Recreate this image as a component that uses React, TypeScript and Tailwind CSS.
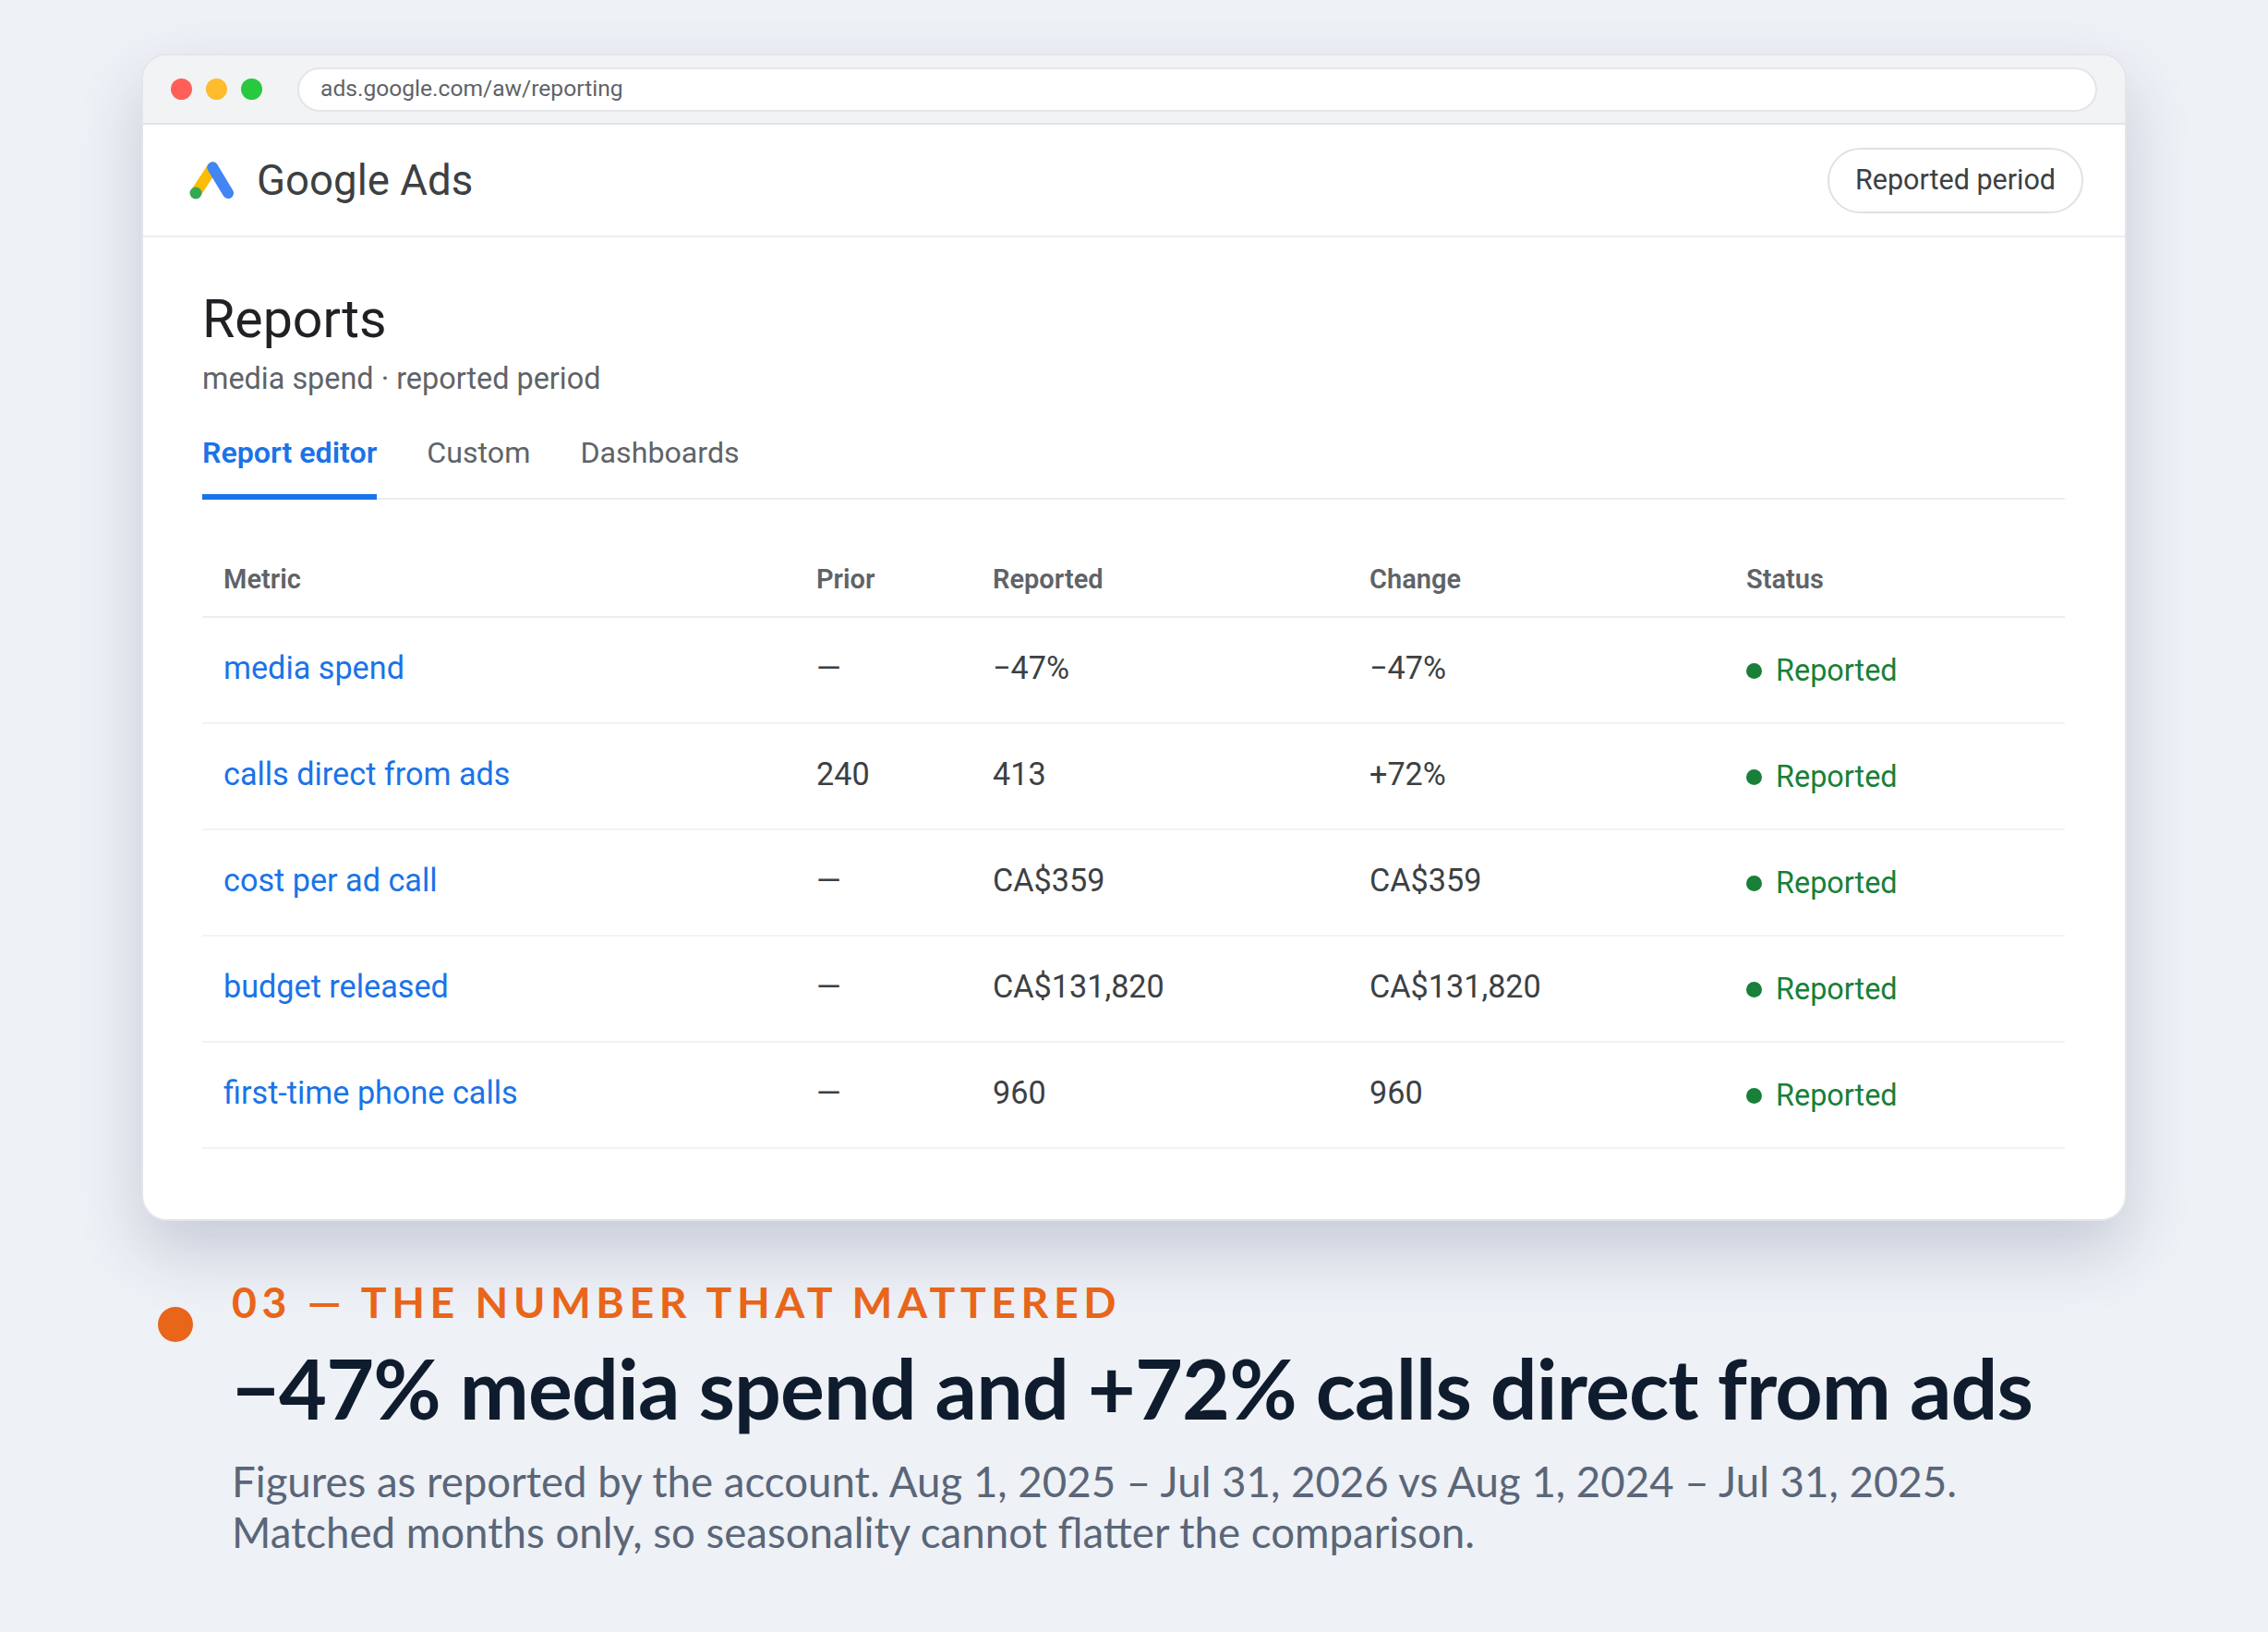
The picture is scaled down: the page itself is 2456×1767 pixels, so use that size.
const rows = [
  { metric: "media spend", prior: "—", reported: "−47%", change: "−47%" },
  { metric: "calls direct from ads", prior: "240", reported: "413", change: "+72%" },
  { metric: "cost per ad call", prior: "—", reported: "CA$359", change: "CA$359" },
  { metric: "budget released", prior: "—", reported: "CA$131,820", change: "CA$131,820" },
  { metric: "first-time phone calls", prior: "—", reported: "960", change: "960" },
];

const gridCols = "grid grid-cols-[642px_192px_408px_407px_1fr]";

function AdsLogo() {
  return (
    <svg width="48" height="42" viewBox="0 0 48 42" fill="none">
      <path d="M25.3 7.3 7 35" stroke="#fbbc04" strokeWidth="12" strokeLinecap="round" />
      <path d="M25.3 7.3 42 35" stroke="#4285f4" strokeWidth="12" strokeLinecap="round" />
      <circle cx="7" cy="35" r="6.5" fill="#34a853" />
    </svg>
  );
}

export default function App() {
  return (
    <div className="min-h-[1767px] bg-[#eef1f6] pt-[58px] pl-[153px] font-['Roboto',sans-serif]">
      <div className="h-[1264px] w-[2150px] overflow-hidden rounded-[28px] border-2 border-[#e3e5ea] bg-white shadow-[0_32px_70px_rgba(40,52,90,0.2)]">
        <div className="flex h-[75px] items-center border-b-2 border-[#e1e3e8] bg-[#f1f3f5] pr-[30px] pl-[30px]">
          <div className="flex gap-[15px]">
            <span className="h-[23px] w-[23px] rounded-full bg-[#ff5f57]" />
            <span className="h-[23px] w-[23px] rounded-full bg-[#febc2e]" />
            <span className="h-[23px] w-[23px] rounded-full bg-[#28c840]" />
          </div>
          <div className="ml-[38px] flex h-[48px] flex-1 items-center rounded-full border-2 border-[#e3e5ea] bg-white pl-[23px] text-[24.6px] text-[#5f6368]">
            ads.google.com/aw/reporting
          </div>
        </div>

        <div className="flex h-[122px] items-center justify-between border-b-2 border-[#eceef1] pr-[45px] pl-[50px]">
          <div className="flex items-center gap-[25px]">
            <AdsLogo />
            <span className="pt-[3px] text-[45.6px] text-[#3c4043]">Google Ads</span>
          </div>
          <div className="flex h-[71px] w-[277px] items-center justify-center rounded-full border-2 border-[#dfe1e6] text-[30.5px] text-[#3c4043]">
            Reported period
          </div>
        </div>

        <div className="pt-[59px] pr-[65px] pl-[64px]">
          <h1 className="text-[57.3px] leading-[60px] font-normal text-[#202124]">Reports</h1>
          <p className="mt-[12px] text-[32.4px] leading-[44px] text-[#5f6368]">media spend · reported period</p>

          <div className="mt-[22px] flex gap-[54px] border-b-2 border-[#eceef1]">
            <div className="-mb-[2px] h-[87px] border-b-[6px] border-[#1a73e8] pt-[14px] text-[32.2px] leading-[44px] font-semibold text-[#1a73e8]">
              Report editor
            </div>
            <div className="h-[85px] pt-[14px] text-[32.2px] leading-[44px] text-[#5f6368]">Custom</div>
            <div className="h-[85px] pt-[14px] text-[32.2px] leading-[44px] text-[#5f6368]">Dashboards</div>
          </div>

          <div className={`${gridCols} mt-[43px] h-[85px] items-center border-b-2 border-[#eceef1] pt-[4px] text-[29px] font-semibold text-[#5f6368]`}>
            <span className="pl-[23px]">Metric</span>
            <span className="pl-[23px]">Prior</span>
            <span className="pl-[22px]">Reported</span>
            <span className="pl-[22px]">Change</span>
            <span className="pl-[23px]">Status</span>
          </div>

          {rows.map((row) => (
            <div
              key={row.metric}
              className={`${gridCols} h-[115px] items-center border-b-2 border-[#f1f3f4] text-[34.2px] text-[#3c4043]`}
            >
              <span className="pb-[3px] pl-[23px] text-[#1a73e8]">{row.metric}</span>
              <span className="pb-[3px] pl-[23px]">{row.prior}</span>
              <span className="pb-[3px] pl-[22px]">{row.reported}</span>
              <span className="pb-[3px] pl-[22px]">{row.change}</span>
              <span className="flex items-center gap-[15px] pt-[2px] pl-[23px] text-[32.4px] text-[#188038]">
                <span className="h-[17px] w-[17px] rounded-full bg-[#188038]" />
                Reported
              </span>
            </div>
          ))}
        </div>
      </div>

      <div className="mt-[58px] flex font-['Lato',sans-serif]">
        <span className="mt-[35px] ml-[18px] h-[38px] w-[38px] rounded-full bg-[#e8651a]" />
        <div className="ml-[42px]">
          <div className="text-[46.4px] leading-[58px] font-bold tracking-[0.12em] text-[#e8651a]">
            03 — THE NUMBER THAT MATTERED
          </div>
          <h2 className="mt-[14px] text-[89.7px] leading-[100px] font-bold tracking-[-0.01em] text-[#0f1c2e]">
            −47% media spend and +72% calls direct from ads
          </h2>
          <p className="mt-[24px] text-[45.6px] leading-[55px] text-[#5a6678]">
            Figures as reported by the account. Aug 1, 2025 – Jul 31, 2026 vs Aug 1, 2024 – Jul 31, 2025.
            <br />
            Matched months only, so seasonality cannot flatter the comparison.
          </p>
        </div>
      </div>
    </div>
  );
}
